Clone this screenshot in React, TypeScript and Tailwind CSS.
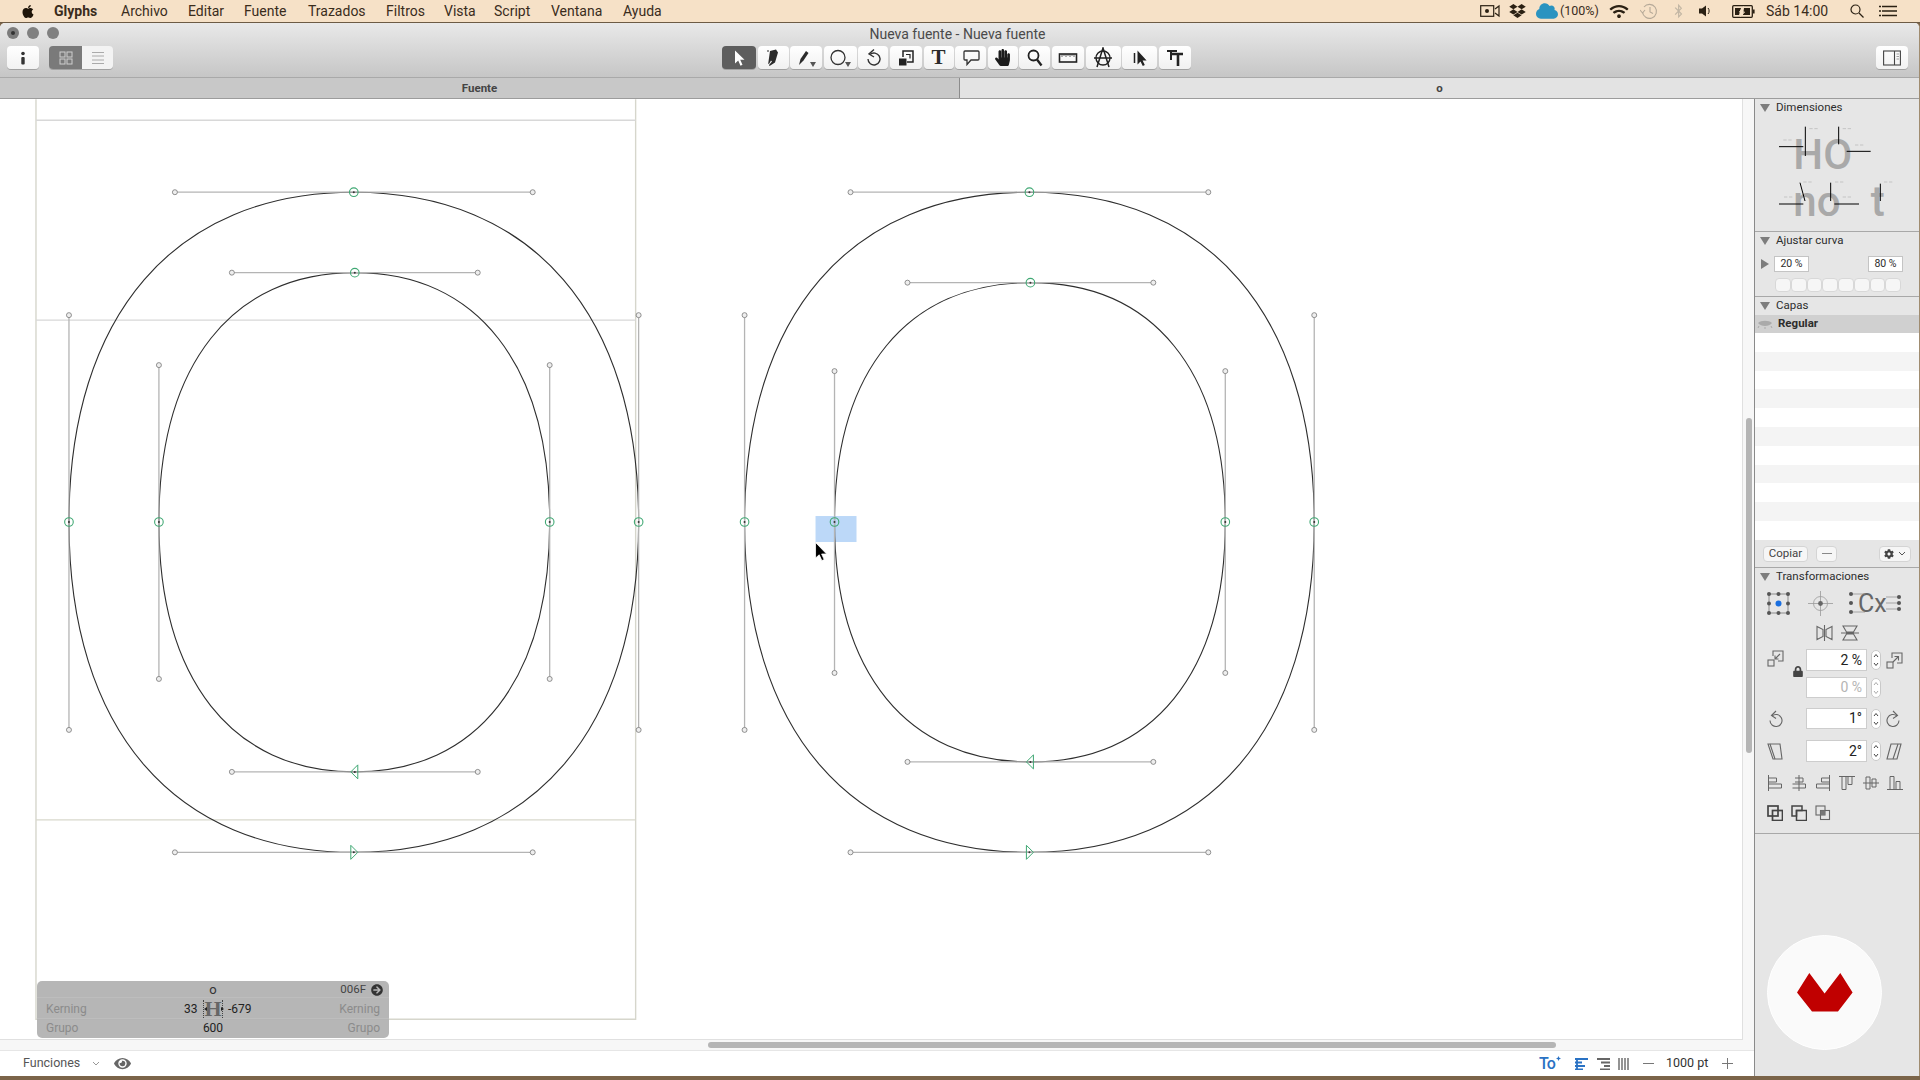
import { FaApple, FaDropbox, FaWifi, FaBluetoothB, FaEye, FaCog, FaLock, FaArrowCircleRight, FaHandPaper, FaCloud } from "react-icons/fa"

const menus = [
  { name: "Glyphs", cls: "w-[67px] font-bold" },
  { name: "Archivo", cls: "w-[67px]" },
  { name: "Editar", cls: "w-[56px]" },
  { name: "Fuente", cls: "w-[64px]" },
  { name: "Trazados", cls: "w-[78px]" },
  { name: "Filtros", cls: "w-[58px]" },
  { name: "Vista", cls: "w-[50px]" },
  { name: "Script", cls: "w-[57px]" },
  { name: "Ventana", cls: "w-[72px]" },
  { name: "Ayuda", cls: "w-[50px]" },
]

const Tri = () => <path d="M0 0h6l-3 5z" fill="#555" />

const tools = [
  {
    cls: "w-[34px] !bg-none !bg-[#5e5e5e]",
    icon: (
      <svg viewBox="0 0 20 20" className="h-5 w-5">
        <path d="M6 2.5v13l3.2-3 2.3 5.2 2-1-2.3-5h4.3z" fill="#fff" />
      </svg>
    ),
  },
  {
    cls: "w-[31px]",
    icon: (
      <svg viewBox="0 0 20 20" className="h-5 w-5">
        <path d="M7 3l6-1.5 2 3-3 10-5.5 3.5-.5-1 3-3.5-1-1-2 3.5-.8-.2z" fill="#2b2b2b" />
        <path d="M5 2v2" stroke="#2b2b2b" />
      </svg>
    ),
  },
  {
    cls: "w-[32px]",
    icon: (
      <svg viewBox="0 0 24 20" className="h-5 w-6">
        <path d="M12 3l2.5 2-5 7.5-4.5 4.5 1.5-6z" fill="#2b2b2b" />
        <g transform="translate(16 14)">
          <Tri />
        </g>
      </svg>
    ),
  },
  {
    cls: "w-[33px]",
    icon: (
      <svg viewBox="0 0 26 20" className="h-5 w-[26px]">
        <circle cx="11" cy="9.5" r="7" fill="none" stroke="#333" strokeWidth="1.3" />
        <g transform="translate(18 14)">
          <Tri />
        </g>
      </svg>
    ),
  },
  {
    cls: "w-[30px]",
    icon: (
      <svg viewBox="0 0 20 20" className="h-5 w-5">
        <path d="M7 6.5a6 6 0 1 1-2 4.5" fill="none" stroke="#333" strokeWidth="1.4" />
        <path d="M11 1.5L6 6l5 3" fill="none" stroke="#333" strokeWidth="1.4" />
      </svg>
    ),
  },
  {
    cls: "w-[32px]",
    icon: (
      <svg viewBox="0 0 20 20" className="h-5 w-5">
        <path d="M7 9V3h10v11h-6" fill="none" stroke="#222" strokeWidth="1.5" />
        <path d="M10 6.5h4v4" fill="none" stroke="#222" strokeWidth="1.2" />
        <rect x="3" y="10.5" width="7.5" height="7" fill="#222" />
      </svg>
    ),
  },
  {
    cls: "w-[30px]",
    icon: <span className="font-['Liberation_Serif',serif] text-[21px] font-bold leading-none text-[#2a2a2a]">T</span>,
  },
  {
    cls: "w-[31px]",
    icon: (
      <svg viewBox="0 0 20 20" className="h-5 w-5">
        <path d="M4 3h13a1 1 0 0 1 1 1v7a1 1 0 0 1-1 1H10l-4 4.5V12H4a1 1 0 0 1-1-1V4a1 1 0 0 1 1-1z" fill="none" stroke="#333" strokeWidth="1.3" />
      </svg>
    ),
  },
  { cls: "w-[30px]", icon: <FaHandPaper className="h-[17px] w-[17px] text-[#1c1c1c]" /> },
  {
    cls: "w-[31px]",
    icon: (
      <svg viewBox="0 0 20 20" className="h-5 w-5">
        <circle cx="8.5" cy="7.5" r="5" fill="none" stroke="#222" strokeWidth="1.8" />
        <path d="M12 11.5l4.5 6" stroke="#222" strokeWidth="2.4" />
      </svg>
    ),
  },
  {
    cls: "w-[32px]",
    icon: (
      <svg viewBox="0 0 20 14" className="h-[14px] w-5">
        <rect x="1.5" y="3" width="17" height="8" fill="none" stroke="#222" strokeWidth="1.6" />
        <path d="M4 3v3M6 3v2M8 3v3M10 3v2M12 3v3M14 3v2M16 3v3" stroke="#222" strokeWidth=".7" />
      </svg>
    ),
  },
  {
    cls: "w-[35px]",
    icon: (
      <svg viewBox="0 0 22 22" className="h-[22px] w-[22px]">
        <circle cx="11" cy="11" r="7" fill="none" stroke="#222" strokeWidth="1.4" />
        <path d="M5 20L11 1l6 19M2 11h18" fill="none" stroke="#222" strokeWidth="1.5" />
      </svg>
    ),
  },
  {
    cls: "w-[35px]",
    icon: (
      <svg viewBox="0 0 20 20" className="h-5 w-5">
        <path d="M7.5 2.5v14l3-3 2.3 4.5 2-1-2.2-4.5h4z" fill="#222" />
        <path d="M4.5 5v10" stroke="#222" strokeWidth="1.5" />
      </svg>
    ),
  },
  {
    cls: "w-[32px]",
    icon: (
      <svg viewBox="0 0 20 20" className="h-5 w-5">
        <path d="M2 3h10M6 3v9" stroke="#222" strokeWidth="2" />
        <path d="M7 6h11M13 6v12" stroke="#222" strokeWidth="2.6" />
      </svg>
    ),
  },
]

const Tri2 = ({ right }: { right?: boolean }) => (
  <svg viewBox="0 0 10 10" className="h-[10px] w-[10px]">
    {right ? <path d="M1 0l8 5-8 5z" fill="#7d7d7d" /> : <path d="M0 1h10l-5 8z" fill="#7d7d7d" />}
  </svg>
)

const Stepper = ({ muted }: { muted?: boolean }) => (
  <svg viewBox="0 0 10 20" className="h-5 w-[10px]">
    <rect x=".5" y=".5" width="9" height="19" rx="4.5" fill="#fff" stroke="#c9c9c9" />
    <path d="M3 7l2-2.5L7 7M3 13l2 2.5L7 13" fill="none" stroke={muted ? "#aaa" : "#444"} strokeWidth="1" />
  </svg>
)

const NumInput = ({ value, muted, cls }: { value: string; muted?: boolean; cls: string }) => (
  <div
    className={`flex w-[61px] items-center justify-end border border-[#cdcdcd] bg-white pr-[4px] text-[14px] ${cls} ${
      muted ? "text-[#b4b4b4]" : "text-[#222]"
    }`}
  >
    {value}
  </div>
)

const aligns = [
  "M1.5 0v16M1.5 3h8v4h-8M1.5 9h13v4h-13",
  "M8 0v16M4 3h8v4H4M1.5 9h13v4h-13",
  "M14.5 0v16M14.5 3h-8v4h8M14.5 9h-13v4h13",
  "M0 1.5h16M3 1.5v13h4v-13M9 1.5v8h4v-8",
  "M0 8h16M3 2v12h4V2zM9 4v8h4V4z",
  "M0 14.5h16M3 14.5v-13h4v13M9 14.5v-8h4v8",
]

const bools = [
  <>
    <rect x="1" y="1" width="10" height="10" fill="none" stroke="#444" strokeWidth="1.7" />
    <rect x="5.5" y="5.5" width="10" height="10" fill="none" stroke="#444" strokeWidth="1.7" />
  </>,
  <>
    <path d="M1 1h10v4.5H5.5V11H1z" fill="none" stroke="#444" strokeWidth="1.5" />
    <rect x="5.5" y="5.5" width="10" height="10" fill="none" stroke="#444" strokeWidth="1.5" />
  </>,
  <>
    <rect x="1" y="1" width="9" height="9" fill="none" stroke="#666" strokeWidth="1.1" />
    <rect x="5.5" y="5.5" width="9" height="9" fill="none" stroke="#666" strokeWidth="1.1" />
    <rect x="5.5" y="5.5" width="4.5" height="4.5" fill="#777" />
  </>,
]

const Handle = ({ x1, y1, x2, y2 }: { x1: number; y1: number; x2: number; y2: number }) => (
  <g>
    <line x1={x1} y1={y1} x2={x2} y2={y2} stroke="#b4b4b4" strokeWidth="1.3" />
    <circle cx={x1} cy={y1} r="2.5" fill="#eee" stroke="#777" strokeWidth=".8" />
    <circle cx={x2} cy={y2} r="2.5" fill="#eee" stroke="#777" strokeWidth=".8" />
  </g>
)

const Node = ({ x, y }: { x: number; y: number }) => (
  <g>
    <circle cx={x} cy={y} r="4.3" fill="none" stroke="#3fa873" strokeWidth="1.1" />
    <circle cx={x} cy={y} r="1" fill="#333" />
  </g>
)

// one glyph "o", outer and inner contour with the handles on top
const Glyph = ({ o, i }: { o: number[]; i: number[] }) => {
  // [left, cx, right, hl, hr, top, bottom, vTop, vBottom]
  const [l, cx, r, hl, hr, t, b, vt, vb] = o
  const [l2, cx2, r2, hl2, hr2, t2, b2, vt2, vb2] = i
  const my = 522
  return (
    <g>
      <path
        d={`M${cx} ${t}C${hr} ${t} ${r} ${vt} ${r} ${my}C${r} ${vb} ${hr} ${b} ${cx} ${b}C${hl} ${b} ${l} ${vb} ${l} ${my}C${l} ${vt} ${hl} ${t} ${cx} ${t}Z`}
        fill="none"
        stroke="#2e2e2e"
        strokeWidth="1.1"
      />
      <path
        d={`M${cx2} ${t2}C${hr2} ${t2} ${r2} ${vt2} ${r2} ${my}C${r2} ${vb2} ${hr2} ${b2} ${cx2} ${b2}C${hl2} ${b2} ${l2} ${vb2} ${l2} ${my}C${l2} ${vt2} ${hl2} ${t2} ${cx2} ${t2}Z`}
        fill="none"
        stroke="#2e2e2e"
        strokeWidth="1.1"
      />
      <Handle x1={hl} y1={t} x2={hr} y2={t} />
      <Handle x1={hl} y1={b} x2={hr} y2={b} />
      <Handle x1={hl2} y1={t2} x2={hr2} y2={t2} />
      <Handle x1={hl2} y1={b2} x2={hr2} y2={b2} />
      <Handle x1={l} y1={vt} x2={l} y2={vb} />
      <Handle x1={r} y1={vt} x2={r} y2={vb} />
      <Handle x1={l2} y1={vt2} x2={l2} y2={vb2} />
      <Handle x1={r2} y1={vt2} x2={r2} y2={vb2} />
      <Node x={cx} y={t} />
      <Node x={cx2} y={t2} />
      <Node x={l} y={my} />
      <Node x={r} y={my} />
      <Node x={l2} y={my} />
      <Node x={r2} y={my} />
      <path d={`M${cx2 + 3} ${b2 - 7}L${cx2 - 4} ${b2}L${cx2 + 3} ${b2 + 7}Z`} fill="none" stroke="#3fa873" strokeWidth="1" />
      <circle cx={cx2} cy={b2} r="1" fill="#333" />
      <path d={`M${cx - 3} ${b - 7}L${cx + 4} ${b}L${cx - 3} ${b + 7}Z`} fill="none" stroke="#3fa873" strokeWidth="1" />
      <circle cx={cx} cy={b} r="1" fill="#333" />
    </g>
  )
}

const Canvas = () => (
  <svg viewBox="0 99 1743 940" className="absolute inset-0 h-full w-full">
    <path d="M36 99V1019.5H636V99" fill="none" stroke="#d6d6cc" strokeWidth="1.4" />
    <path d="M36 120H636M36 320H636" stroke="#d8d8d8" strokeWidth="1.4" />
    <path d="M36 820H636" stroke="#d8d8cc" strokeWidth="1.4" />
    <rect x="816" y="516" width="41" height="26" fill="#bcd8f8" />
    <Glyph o={[69, 354, 639, 175, 533, 192, 852.5, 315, 730]} i={[159, 355, 550, 232, 478, 272.5, 772, 365, 679]} />
    <Glyph o={[745, 1030, 1315, 851, 1209, 192, 852.5, 315, 730]} i={[835, 1031, 1226, 908, 1154, 282.5, 762, 371, 673]} />
    <path d="M816 542.5v15.5l3.7-3.2 2.6 5.8 2.4-1-2.6-5.6h5z" fill="#000" stroke="#fff" strokeWidth=".8" />
  </svg>
)

const GlyphInfo = () => (
  <div className="absolute left-[37px] top-[882px] flex h-[57px] w-[352px] flex-col overflow-hidden rounded-[5px] bg-[#b2b2b2]/95 text-[11.5px] text-[#8b8b8b]">
    <div className="grid h-[17px] grid-cols-[1fr_auto_1fr] items-center border-b border-[#bdbdbd]">
      <span />
      <span className="text-[13px] leading-none text-[#333]">o</span>
      <span className="flex items-center justify-end gap-[5px] pr-[6px] text-[#444]">
        006F
        <FaArrowCircleRight className="h-3 w-3 text-[#333]" />
      </span>
    </div>
    <div className="flex h-[21px] items-center border-b border-[#bdbdbd] pl-[9px] pr-[9px] pt-[2px] text-[12px]">
      <span className="w-[138px]">Kerning</span>
      <span className="w-[19px] text-[#222]">33</span>
      <span className="relative flex h-[18px] w-[20px] items-center justify-center border-x border-dotted border-[#444] font-['Liberation_Serif',serif] text-[22px] font-bold leading-none text-[#666]">
        H
        <svg viewBox="0 0 20 6" className="absolute left-0 top-[6px] h-[6px] w-[20px]">
          <path d="M0 3L3 1v4zM20 3L17 1v4z" fill="#222" />
        </svg>
      </span>
      <span className="ml-[5px] text-[#222]">-679</span>
      <span className="ml-auto">Kerning</span>
    </div>
    <div className="grid h-[19px] grid-cols-[1fr_auto_1fr] items-center px-[9px] pb-[2px] text-[12px]">
      <span>Grupo</span>
      <span className="text-[#222]">600</span>
      <span className="text-right">Grupo</span>
    </div>
  </div>
)

const Sidebar = () => (
  <aside className="flex w-[165px] shrink-0 flex-col border-l border-[#8a8a8a] bg-[#e6e6e6] text-[11.5px] text-[#2d2d2d]">
    <section className="h-[133px] border-b border-[#a8a8a8]">
      <div className="flex h-[17px] items-center gap-[6px] pl-[5px]">
        <Tri2 />
        Dimensiones
      </div>
      <svg viewBox="45 80 495 345" className="h-[115px] w-[165px]">
        <text x="160" y="238" fontSize="126" fontWeight="500" fontFamily="Roboto, sans-serif" fill="#a9a9a9">HO</text>
        <text x="160" y="380" fontSize="126" fontWeight="500" fontFamily="Roboto, sans-serif" fill="#a9a9a9">no</text>
        <text x="392" y="380" fontSize="126" fontWeight="500" fontFamily="Roboto, sans-serif" fill="#a9a9a9">t</text>
        <path
          d="M196 112V200M117 172H190M296 112V165M320 186H392M180 280L195 335M117 344H190M272 280V335M283 344H357M421 283V335"
          stroke="#000"
          strokeWidth="3"
          fill="none"
        />
        <path
          d="M130 152h25M208 118h25M308 118h25M345 167h25M190 278h25M285 278h25M132 323h25M308 323h25M432 278h25"
          stroke="#c4c4c4"
          strokeWidth="3"
          strokeDasharray="10 5"
        />
      </svg>
    </section>
    <section className="h-[65px] border-b border-[#a8a8a8]">
      <div className="flex h-[17px] items-center gap-[6px] pl-[5px]">
        <Tri2 />
        Ajustar curva
      </div>
      <div className="mt-[7px] flex items-center pl-[5px] text-[10.5px]">
        <Tri2 right />
        <span className="ml-[4px] flex h-4 w-[35px] items-center justify-center border border-[#c4c4c4] bg-white">20 %</span>
        <span className="ml-[59px] flex h-4 w-[35px] items-center justify-center border border-[#c4c4c4] bg-white">80 %</span>
      </div>
      <div className="mt-[6px] flex pl-[20px]">
        {[0, 1, 2, 3, 4, 5, 6, 7].map((n) => (
          <span key={n} className="h-[14px] w-[15.75px] rounded-[4px] border border-[#d8d8d8] bg-[#f6f6f6]" />
        ))}
      </div>
    </section>
    <section className="h-[243px] border-b border-[#a8a8a8]">
      <div className="flex h-[18px] items-center gap-[6px] pl-[5px]">
        <Tri2 />
        Capas
      </div>
      <div className="flex h-[18px] items-center bg-[#d0d0d0] pl-[2px] font-bold">
        <svg viewBox="0 0 16 10" className="h-[10px] w-4">
          <path d="M1 4c3-3 11-3 14 0-3 4-11 4-14 0z" fill="#aaa" />
          <path d="M2 7l-1 2M8 8v2M14 7l1 2" stroke="#aaa" />
        </svg>
        <span className="ml-[5px]">Regular</span>
      </div>
      <div className="flex flex-col bg-white">
        {[0, 1, 2, 3, 4, 5, 6, 7, 8, 9, 10].map((n) => (
          <div key={n} className={n % 2 ? "h-[18.8px] bg-[#f4f4f4]" : "h-[18.8px] bg-white"} />
        ))}
      </div>
    </section>
    <div className="flex h-[28px] items-center border-b border-[#a8a8a8] pl-[8px] text-[#444]">
      <span className="flex h-4 w-[45px] items-center justify-center rounded-[4px] border border-[#d4d4d4] bg-[#f6f6f6]">Copiar</span>
      <span className="ml-2 flex h-4 w-[21px] items-center justify-center rounded-[4px] border border-[#d4d4d4] bg-[#f6f6f6]">
        <span className="h-px w-[10px] bg-[#888]" />
      </span>
      <span className="ml-[42px] flex h-4 w-[32px] items-center justify-center gap-1 rounded-[4px] border border-[#d4d4d4] bg-[#f6f6f6]">
        <FaCog className="h-[10px] w-[10px] text-[#444]" />
        <svg viewBox="0 0 8 5" className="h-[5px] w-2">
          <path d="M1 1l3 3 3-3" fill="none" stroke="#555" />
        </svg>
      </span>
    </div>
    <section className="h-[266px] border-b border-[#a8a8a8] pt-px">
      <div className="flex h-4 items-center gap-[6px] pl-[5px]">
        <Tri2 />
        Transformaciones
      </div>
      <div className="mt-[6px] flex h-6 items-center pl-[12px]">
        <svg viewBox="0 0 23 23" className="h-[23px] w-[23px]">
          <rect x="2" y="2" width="19" height="19" fill="none" stroke="#777" strokeWidth=".8" />
          <g fill="#555">
            <circle cx="2" cy="2" r="2" />
            <circle cx="11.5" cy="2" r="2" />
            <circle cx="21" cy="2" r="2" />
            <circle cx="2" cy="11.5" r="2" />
            <circle cx="21" cy="11.5" r="2" />
            <circle cx="2" cy="21" r="2" />
            <circle cx="11.5" cy="21" r="2" />
            <circle cx="21" cy="21" r="2" />
          </g>
          <circle cx="11.5" cy="11.5" r="3" fill="#1a6fe0" />
        </svg>
        <svg viewBox="0 0 25 25" className="ml-[18px] h-[25px] w-[25px]">
          <circle cx="12.5" cy="12.5" r="7" fill="none" stroke="#aaa" />
          <path d="M12.5 0v25M0 12.5h25" stroke="#999" strokeWidth=".8" />
          <circle cx="12.5" cy="12.5" r="2.4" fill="#666" />
        </svg>
        <div className="relative ml-[15px] flex h-6 w-[54px] items-center pl-[10px] text-[25px] leading-none text-[#666]">
          Cx
          <svg viewBox="0 0 54 24" className="absolute left-0 top-0 h-6 w-[54px]">
            <path d="M3 3h14M3 21h14M38 6h14M38 12h14M38 18h14" stroke="#888" strokeWidth=".7" />
            <g fill="#555">
              <circle cx="3" cy="3" r="2" />
              <circle cx="3" cy="12" r="2" />
              <circle cx="3" cy="21" r="2" />
              <circle cx="51" cy="6" r="2" />
              <circle cx="51" cy="12" r="2" />
              <circle cx="51" cy="18" r="2" />
            </g>
          </svg>
        </div>
      </div>
      <div className="mt-[10px] flex h-4 items-center pl-[61px]">
        <svg viewBox="0 0 17 16" className="h-4 w-[17px]">
          <path d="M8.5 0v16M1 1.5l6 3v7l-6 3zM16 1.5l-6 3v7l6 3z" fill="none" stroke="#666" strokeWidth="1.1" />
        </svg>
        <svg viewBox="0 0 18 16" className="ml-2 h-4 w-[18px]">
          <path d="M0 8h18M2 1h14l-3.5 6h-7zM2 15h14l-3.5-6h-7z" fill="none" stroke="#666" strokeWidth="1.1" />
        </svg>
      </div>
      <div className="mt-2 flex">
        <div className="flex w-[51px] flex-col">
          <svg viewBox="0 0 17 17" className="ml-[12px] mt-[1px] h-[17px] w-[17px]">
            <path d="M6 6V1h10v10h-5" fill="none" stroke="#666" strokeWidth="1.1" />
            <rect x="1" y="10" width="6" height="6" fill="none" stroke="#666" strokeWidth="1.1" />
            <path d="M13 4L8 9M8 5.5V9h3.5" fill="none" stroke="#666" strokeWidth="1.1" />
          </svg>
          <FaLock className="ml-[38px] mt-[-1px] h-[11px] w-[10px] text-[#444]" />
        </div>
        <div className="flex flex-col">
          <div className="flex items-center">
            <NumInput value="2 %" cls="h-[22px]" />
            <span className="ml-1">
              <Stepper />
            </span>
            <svg viewBox="0 0 17 17" className="ml-[5px] h-[17px] w-[17px]">
              <path d="M6 6V1h10v10h-5" fill="none" stroke="#666" strokeWidth="1.1" />
              <rect x="1" y="10" width="6" height="6" fill="none" stroke="#666" strokeWidth="1.1" />
              <path d="M7 10l5-5M8.500 4.500H12.500V8.500" fill="none" stroke="#666" strokeWidth="1.1" />
            </svg>
          </div>
          <div className="mt-[6px] flex items-center">
            <NumInput value="0 %" muted cls="h-[21px]" />
            <span className="ml-1">
              <Stepper muted />
            </span>
          </div>
        </div>
      </div>
      <div className="mt-[10px] flex h-[21px] items-center">
        <svg viewBox="0 0 16 18" className="ml-[12px] h-[18px] w-4">
          <path d="M5 6a6 6 0 1 1-2 4.500" fill="none" stroke="#666" strokeWidth="1.1" />
          <path d="M9 1L4.500 5.500 9 8.500" fill="none" stroke="#666" strokeWidth="1.1" />
        </svg>
        <NumInput value="1°" cls="ml-[23px] h-[21px]" />
        <span className="ml-1">
          <Stepper />
        </span>
        <svg viewBox="0 0 16 18" className="ml-[5px] h-[18px] w-4">
          <path d="M11 6a6 6 0 1 0 2 4.500" fill="none" stroke="#666" strokeWidth="1.1" />
          <path d="M7 1l4.500 4.500L7 8.500" fill="none" stroke="#666" strokeWidth="1.1" />
        </svg>
      </div>
      <div className="mt-[11px] flex h-[22px] items-center">
        <svg viewBox="0 0 16 17" className="ml-[12px] h-[17px] w-4">
          <path d="M1 1h12l2 15H6z" fill="none" stroke="#666" strokeWidth="1.1" />
          <path d="M3 1l5 15" stroke="#666" strokeWidth="1.1" />
        </svg>
        <NumInput value="2°" cls="ml-[23px] h-[22px]" />
        <span className="ml-1">
          <Stepper />
        </span>
        <svg viewBox="0 0 16 17" className="ml-[5px] h-[17px] w-4">
          <path d="M5 1h10l-4 15H1z" fill="none" stroke="#666" strokeWidth="1.1" />
          <path d="M12 1L7 16" stroke="#666" strokeWidth="1.1" />
        </svg>
      </div>
      <div className="mt-[13px] flex h-4 gap-2 pl-[12px]">
        {aligns.map((d, n) => (
          <svg key={n} viewBox="0 0 16 16" className="h-4 w-4">
            <path d={d} fill="none" stroke="#666" strokeWidth="1" />
          </svg>
        ))}
      </div>
      <div className="mt-[14px] flex h-4 gap-2 pl-[12px]">
        {bools.map((b, n) => (
          <svg key={n} viewBox="0 0 16 16" className="h-4 w-4">
            {b}
          </svg>
        ))}
      </div>
    </section>
    <div className="flex flex-1 items-start pl-[12px] pt-[101px]">
      <div className="flex h-[115px] w-[115px] items-center justify-center rounded-full border border-white bg-[#fafafa]">
        <svg viewBox="0 0 56 39" className="h-[39px] w-[56px]">
          <path d="M0 19.500L12.300 0 27.600 20.500 43.300 0 55.600 19.500 41 38.500H15z" fill="#c00000" />
        </svg>
      </div>
    </div>
  </aside>
)

export default function App() {
  return (
    <div className="flex h-[1080px] w-[1920px] flex-col overflow-hidden bg-[#7b6449] font-['Roboto',sans-serif] text-[#2b2b2b]">
      {/* menu bar */}
      <header className="flex h-[23px] shrink-0 items-center border-b border-[#6d5b45] bg-[#f6e1c7] text-[14px] text-[#3a2c1c]">
        <FaApple className="ml-[21px] h-[15px] w-[14px] text-[#1f1509]" />
        <nav className="ml-[19px] flex">
          {menus.map((m) => (
            <span key={m.name} className={`whitespace-nowrap ${m.cls}`}>
              {m.name}
            </span>
          ))}
        </nav>
        <div className="ml-auto flex items-center pr-[23px]">
          <svg viewBox="0 0 20 14" className="h-[14px] w-5">
            <rect x=".7" y="1.700" width="13" height="10.600" fill="none" stroke="#2a2013" strokeWidth="1.2" />
            <circle cx="7" cy="7" r="2" fill="#2a2013" />
            <path d="M15 5l4-3v10l-4-3" fill="none" stroke="#2a2013" strokeWidth="1.2" />
          </svg>
          <FaDropbox className="ml-[9px] h-[16px] w-[17px] text-[#2a2013]" />
          <FaCloud className="ml-[10px] h-[18px] w-[22px] text-[#2a93c0]" />
          <span className="ml-[2px] w-[38px] whitespace-nowrap text-[12.5px]">(100%)</span>
          <FaWifi className="ml-[11px] h-[15px] w-5 text-[#2a2013]" />
          <svg viewBox="0 0 18 18" className="ml-[11px] h-[18px] w-[18px]">
            <path d="M4 5a7 7 0 1 1-1.500 5" fill="none" stroke="#b5a998" strokeWidth="1.1" />
            <path d="M0 8l2.500 3L5 8M10 5v5l3 1.500" fill="none" stroke="#b5a998" strokeWidth="1.1" />
          </svg>
          <FaBluetoothB className="ml-[16px] h-[16px] w-[9px] text-[#c2b6a4]" />
          <svg viewBox="0 0 13 12" className="ml-[16px] h-3 w-[13px]">
            <path d="M0 3.500h3L7 .5v11L3 8.500H0z" fill="#2a2013" />
            <path d="M9 3c1.500 1.500 1.500 4.500 0 6" fill="none" stroke="#2a2013" />
          </svg>
          <svg viewBox="0 0 23 13" className="ml-[20px] h-[13px] w-[23px]">
            <rect x=".7" y=".7" width="19.600" height="11.600" rx="1" fill="none" stroke="#2a2013" strokeWidth="1.3" />
            <path d="M3 3h6l-2 7H3zM12 3h6v7h-7z" fill="#2a2013" />
            <path d="M11.500 1.500L7.500 7h5L8.500 11.500" fill="none" stroke="#f6e1c7" strokeWidth="1" />
            <rect x="21" y="4.500" width="1.600" height="4" fill="#2a2013" />
          </svg>
          <span className="ml-[11px] w-[64px] whitespace-nowrap">Sáb 14:00</span>
          <svg viewBox="0 0 14 14" className="ml-[20px] h-[14px] w-[14px]">
            <circle cx="5.500" cy="5.500" r="4.500" fill="none" stroke="#2a2013" strokeWidth="1.200" />
            <path d="M9 9l4.500 4.500" stroke="#2a2013" strokeWidth="1.300" />
          </svg>
          <svg viewBox="0 0 18 12" className="ml-[15px] h-3 w-[18px]">
            <path d="M3 1.500h15M3 6h15M3 10.500h15M0 1.500h2M0 6h2M0 10.500h2" stroke="#2a2013" strokeWidth="1.500" />
          </svg>
        </div>
      </header>

      {/* window */}
      <div className="flex h-[1053px] shrink-0 flex-col overflow-hidden rounded-t-[5px] border-r border-[#a08c70] bg-white">
        <div className="flex h-[55px] shrink-0 flex-col border-b border-[#a9a9a9] bg-linear-to-b from-[#e9e9e9] to-[#c6c6c6]">
          <div className="relative flex h-[23px] items-center justify-center pr-[4px] text-[14px] text-[#4a4a4a]">
            <div className="absolute left-[7px] top-[4px] flex gap-2">
              <span className="flex h-3 w-3 items-center justify-center rounded-full bg-[#7c7c7c]">
                <span className="h-1 w-1 rounded-full bg-[#333]" />
              </span>
              <span className="h-3 w-3 rounded-full bg-[#808080]" />
              <span className="h-3 w-3 rounded-full bg-[#808080]" />
            </div>
            Nueva fuente - Nueva fuente
          </div>
          <div className="flex h-[23px] items-start">
            <div className="flex w-[722px] shrink-0 pl-[7px]">
              <button className="flex h-[23px] w-[32px] items-center justify-center rounded-[4px] bg-linear-to-b from-white to-[#f2f2f2] shadow-[0_1px_0_rgba(0,0,0,0.2)]">
                <svg viewBox="0 0 6 14" className="h-[14px] w-[6px]">
                  <circle cx="3" cy="2.500" r="1.800" fill="#333" />
                  <rect x="1.300" y="6" width="3.400" height="7.500" rx="1" fill="#333" />
                </svg>
              </button>
              <div className="ml-[10px] flex h-[23px] w-[64px] overflow-hidden rounded-[4px] shadow-[0_1px_0_rgba(0,0,0,0.2)]">
                <span className="flex w-[33px] items-center justify-center bg-[#7a7a7a]">
                  <svg viewBox="0 0 14 14" className="h-[14px] w-[14px]">
                    <g fill="none" stroke="#cfcfcf" strokeWidth="1">
                      <rect x="1" y="1" width="5" height="5" />
                      <rect x="8" y="1" width="5" height="5" />
                      <rect x="1" y="8" width="5" height="5" />
                      <rect x="8" y="8" width="5" height="5" />
                    </g>
                  </svg>
                </span>
                <span className="flex flex-1 items-center justify-center bg-[#f3f3f3]">
                  <svg viewBox="0 0 14 14" className="h-[14px] w-[14px]">
                    <path d="M1 1.500h12M1 5h12M1 9h12M1 12.500h12" stroke="#aaa" strokeWidth="1" />
                  </svg>
                </span>
              </div>
            </div>
            <div className="flex gap-[1.6px]">
              {tools.map((t, n) => (
                <button
                  key={n}
                  className={`flex h-[23px] items-center justify-center rounded-[4px] bg-linear-to-b from-white to-[#f1f1f1] shadow-[0_1px_0_rgba(0,0,0,0.2)] ${t.cls}`}
                >
                  {t.icon}
                </button>
              ))}
            </div>
            <button className="ml-auto mr-[11px] flex h-[23px] w-[32px] items-center justify-center rounded-[4px] bg-linear-to-b from-white to-[#f2f2f2] shadow-[0_1px_0_rgba(0,0,0,0.2)]">
              <svg viewBox="0 0 18 16" className="h-4 w-[18px]">
                <rect x=".6" y="1" width="16.800" height="14" fill="none" stroke="#444" strokeWidth="1.100" />
                <path d="M11.500 1v14" stroke="#444" strokeWidth="1.100" />
                <path d="M13.500 4h2.500M13.500 6.500h2.500M13.500 9h2.500" stroke="#888" strokeWidth=".8" />
              </svg>
            </button>
          </div>
        </div>

        {/* tabs */}
        <div className="flex h-[21px] shrink-0 border-b border-[#9c9c9c] text-[11.5px] font-bold text-[#444]">
          <div className="flex w-[960px] items-center justify-center border-r border-[#8c8c8c] bg-[#c8c8c8] pt-[2px]">Fuente</div>
          <div className="flex flex-1 items-center justify-center bg-[#e3e3e3] pt-[2px]">o</div>
        </div>

        <div className="flex min-h-0 flex-1">
          <div className="flex min-w-0 flex-1 flex-col">
            <div className="flex min-h-0 flex-1">
              <div className="flex min-w-0 flex-1 flex-col">
                <main className="relative min-h-0 flex-1 border-b border-r border-[#e0e0e0] bg-white">
                  <Canvas />
                  <GlyphInfo />
                </main>
                <div className="flex h-[10px] shrink-0 items-center bg-[#f7f7f7]">
                  <span className="ml-[708px] h-[6px] w-[848px] rounded-full bg-[#b5b5b5]" />
                </div>
              </div>
              <div className="w-[11px] shrink-0 bg-[#f7f7f7] pl-[3px]">
                <div className="mt-[319px] h-[335px] w-[6px] rounded-full bg-[#b5b5b5]" />
              </div>
            </div>
            {/* bottom bar */}
            <footer className="flex h-[26px] shrink-0 items-center border-t border-[#e6e6e6] bg-white text-[12.5px] text-[#555]">
              <span className="ml-[23px] w-[69px]">Funciones</span>
              <svg viewBox="0 0 8 5" className="h-[5px] w-2">
                <path d="M1 1l3 3 3-3" fill="none" stroke="#999" />
              </svg>
              <FaEye className="ml-[13px] h-[15px] w-[19px] text-[#666]" />
              <div className="ml-[1407px] flex items-center">
                <span className="flex w-[22px] items-start text-[16px] font-medium leading-none tracking-[-1px] text-[#2a72c4]">
                  To
                  <svg viewBox="0 0 5 5" className="ml-[1px] h-[5px] w-[5px] shrink-0">
                    <path d="M2.500 0l.8 1.700 1.700.8-1.700.8-.8 1.700-.8-1.700L0 2.500l1.700-.8z" fill="#2a72c4" />
                  </svg>
                </span>
                <svg viewBox="0 0 13 12" className="ml-[14px] h-3 w-[13px]">
                  <path d="M0 1h13M0 4.500h7M0 8h10M0 11.500h8M2 0v12" stroke="#2a72c4" strokeWidth="1.800" fill="none" />
                </svg>
                <svg viewBox="0 0 13 12" className="ml-[9px] h-3 w-[13px]">
                  <path d="M0 1h13M4 4.500h9M7 8h6M3 11.500h10" stroke="#666" strokeWidth="1.800" />
                </svg>
                <svg viewBox="0 0 11 12" className="ml-[8px] h-3 w-[11px]">
                  <path d="M1 0v12M4 0v12M7 0v12M10 0v12" stroke="#666" strokeWidth="1.400" />
                </svg>
                <span className="ml-[14px] h-px w-[11px] bg-[#777]" />
                <span className="ml-[12px] w-[43px] whitespace-nowrap text-[#333]">1000 pt</span>
                <svg viewBox="0 0 11 11" className="ml-[13px] h-[11px] w-[11px]">
                  <path d="M5.500 0v11M0 5.500h11" stroke="#777" />
                </svg>
              </div>
            </footer>
          </div>
          <Sidebar />
        </div>
      </div>
    </div>
  )
}
